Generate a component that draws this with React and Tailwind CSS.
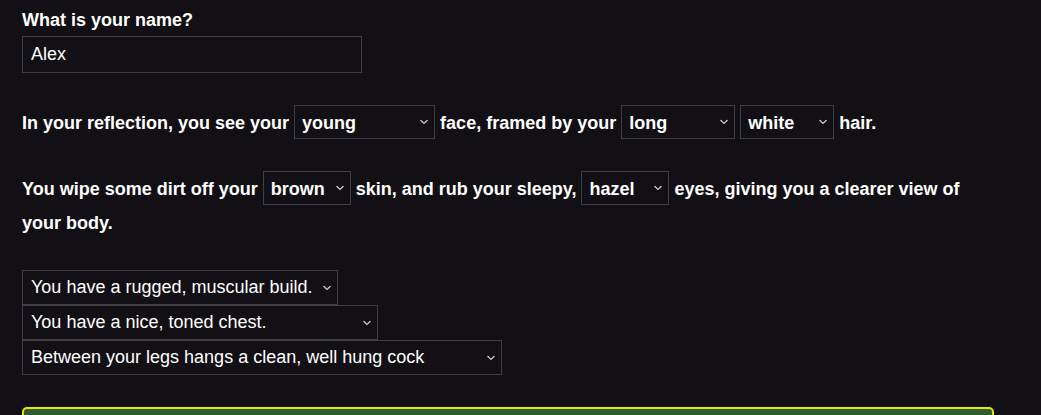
import React, { useState } from "react";

function Chevron() {
  return (
    <svg
      width="8"
      height="5"
      viewBox="0 0 8 5"
      className="pointer-events-none absolute right-[7px] top-1/2 -translate-y-1/2"
    >
      <path d="M0.5 0.5 L4 4 L7.5 0.5" fill="none" stroke="#d4d4d4" strokeWidth="1.1" />
    </svg>
  );
}

function InlineSelect({ value, options, width, onChange }) {
  return (
    <span className="relative inline-block align-baseline" style={{ width }}>
      <select
        value={value}
        onChange={(e) => onChange(e.target.value)}
        className="block h-[34px] w-full appearance-none border border-[#3f3e42] bg-[#121014] pl-[7px] pr-[20px] text-[18px] font-bold text-white outline-none"
      >
        {options.map((o) => (
          <option key={o} value={o}>
            {o}
          </option>
        ))}
      </select>
      <Chevron />
    </span>
  );
}

function BlockSelect({ value, options, width, onChange }) {
  return (
    <div className="relative" style={{ width }}>
      <select
        value={value}
        onChange={(e) => onChange(e.target.value)}
        className="block h-[35px] w-full appearance-none border border-[#3f3e42] bg-[#121014] pl-[8px] pr-[20px] text-[18px] font-normal text-white outline-none"
      >
        {options.map((o) => (
          <option key={o} value={o}>
            {o}
          </option>
        ))}
      </select>
      <Chevron />
    </div>
  );
}

export default function App() {
  const [name, setName] = useState("Alex");
  const [age, setAge] = useState("young");
  const [length, setLength] = useState("long");
  const [hair, setHair] = useState("white");
  const [skin, setSkin] = useState("brown");
  const [eyes, setEyes] = useState("hazel");
  const [build, setBuild] = useState("You have a rugged, muscular build.");
  const [chest, setChest] = useState("You have a nice, toned chest.");
  const [legs, setLegs] = useState("Between your legs hangs a clean, well hung cock");

  return (
    <div className="min-h-[415px] overflow-hidden bg-[#121014] px-[22px] pt-[8px] font-['Liberation_Sans',Arial,sans-serif] text-white">
      <p className="text-[18px] font-bold leading-[24px]">What is your name?</p>
      <input
        value={name}
        onChange={(e) => setName(e.target.value)}
        className="mt-[4px] block h-[37px] w-[340px] border border-[#3f3e42] bg-[#121014] px-[8px] text-[18px] text-white outline-none"
      />

      <p className="mt-[32px] text-[18px] font-bold leading-[34px]">
        In your reflection, you see your{" "}
        <InlineSelect value={age} onChange={setAge} width={141} options={["young", "middle-aged", "old"]} />{" "}
        face, framed by your{" "}
        <InlineSelect value={length} onChange={setLength} width={114} options={["long", "short", "shoulder-length"]} />{" "}
        <InlineSelect value={hair} onChange={setHair} width={94} options={["white", "black", "blonde", "red"]} />{" "}
        hair.
      </p>

      <p className="mt-[31px] w-[960px] text-[18px] font-bold leading-[34px]">
        You wipe some dirt off your{" "}
        <InlineSelect value={skin} onChange={setSkin} width={88} options={["brown", "pale", "tan", "dark"]} />{" "}
        skin, and rub your sleepy,{" "}
        <InlineSelect value={eyes} onChange={setEyes} width={88} options={["hazel", "blue", "green", "brown"]} />{" "}
        eyes, giving you a clearer view of your body.
      </p>

      <div className="mt-[30px]">
        <BlockSelect
          value={build}
          onChange={setBuild}
          width={316}
          options={["You have a rugged, muscular build.", "You have a slim build."]}
        />
        <BlockSelect
          value={chest}
          onChange={setChest}
          width={356}
          options={["You have a nice, toned chest.", "You have a flat chest."]}
        />
        <BlockSelect
          value={legs}
          onChange={setLegs}
          width={480}
          options={["Between your legs hangs a clean, well hung cock"]}
        />
      </div>

      <div className="mt-[32px] h-[60px] w-[972px] rounded-[5px] border-2 border-[#e6e800] bg-[#2d5e2e]" />
    </div>
  );
}
